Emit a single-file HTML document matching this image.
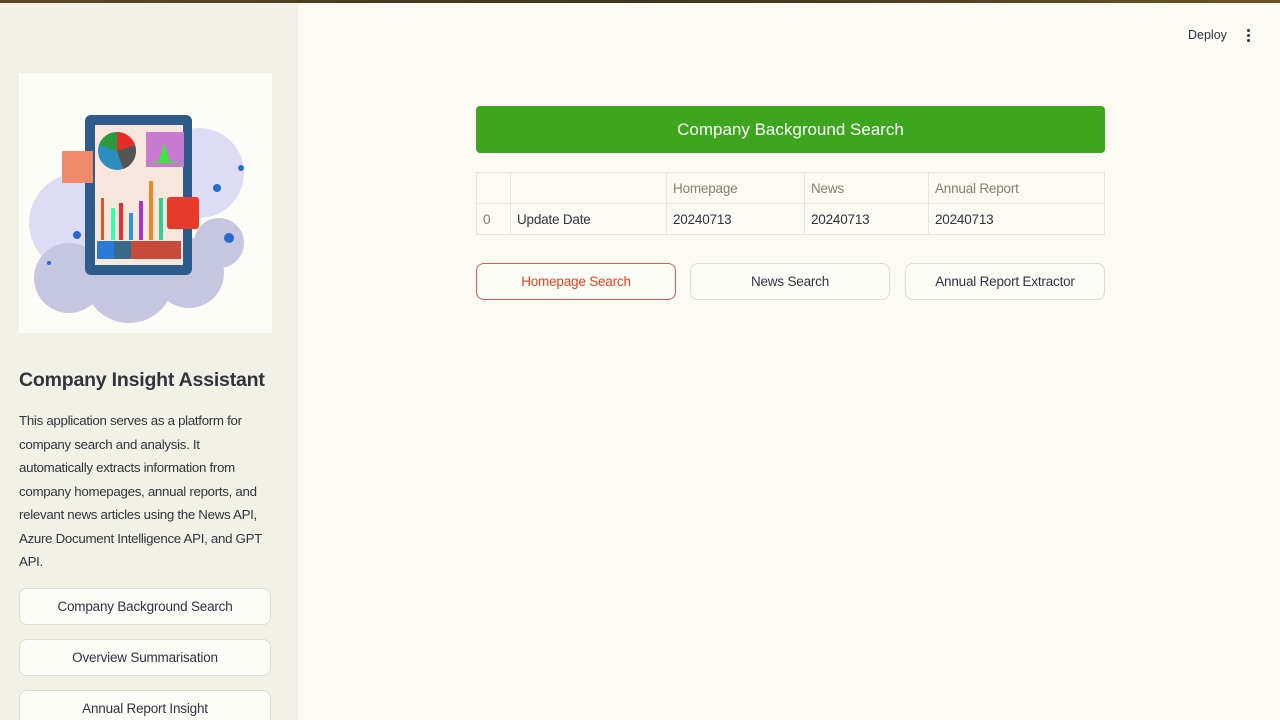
<!DOCTYPE html>
<html><head><meta charset="utf-8"><style>
*{box-sizing:border-box;margin:0;padding:0}
html,body{width:1280px;height:720px;overflow:hidden}
body{background:#fbfbf3;font-family:"Liberation Sans",sans-serif;color:#31333f;position:relative}
.top{position:absolute;left:0;top:0;width:1280px;height:3px;background:linear-gradient(90deg,#5a4a20,#3a3520,#6a5520)}
.side{position:absolute;left:0;top:3px;width:298px;height:717px;background:#f1f1e6}
.img{position:absolute;left:19px;top:73px;width:253px;height:260px;background:#fdfdf8}
h2{position:absolute;left:19px;top:369px;font-size:19.5px;font-weight:bold;color:#31333f;letter-spacing:-0.2px}
.desc{position:absolute;left:19px;top:409px;width:275px;font-size:13.3px;line-height:23.5px;letter-spacing:-0.3px;white-space:nowrap}
.sb{position:absolute;left:19px;width:252px;height:37px;border:1px solid #dcdcd0;border-radius:8px;background:#fdfdf8;font-size:13.5px;text-align:center;line-height:35px;letter-spacing:-0.2px}
.deploy{position:absolute;left:1188px;top:28px;font-size:12.5px}
.dots{position:absolute;left:1247px;top:29px;width:4px}
.dots i{display:block;width:3px;height:3px;background:#31333f;border-radius:50%;margin-bottom:2px}
.green{position:absolute;left:476px;top:106px;width:629px;height:47px;background:#3ea51e;border-radius:4px;color:#fff;font-size:17px;text-align:center;line-height:47px}
table{position:absolute;left:476px;top:172px;width:629px;border-collapse:collapse;font-size:13.5px;letter-spacing:-0.2px}
td{border:1px solid #e6e6d6;height:31px;padding:0 6px}
.g{color:#808070}
.btn{position:absolute;top:263px;width:200px;height:37px;border:1px solid #dcdcd0;border-radius:8px;font-size:13.5px;text-align:center;line-height:35px;background:#fdfdf8;letter-spacing:-0.2px}
</style></head><body>
<div class="top"></div>
<div class="side"></div>
<div class="img">
<svg width="253" height="260" viewBox="0 0 253 260">
<circle cx="180" cy="100" r="45" fill="#dcdcf5"/><circle cx="60" cy="150" r="50" fill="#dcdcf5"/>
<circle cx="50" cy="205" r="35" fill="#c5c6e0"/><circle cx="110" cy="205" r="45" fill="#c5c6e0"/><circle cx="170" cy="200" r="35" fill="#c5c6e0"/><circle cx="200" cy="170" r="25" fill="#c5c6e0"/>
<rect x="66" y="42" width="107" height="160" rx="6" fill="#2c5b8c"/>
<rect x="76" y="52" width="88" height="140" fill="#f6e6dc"/>
<circle cx="98" cy="78" r="19" fill="#2a8fc0"/><path d="M98 78 L98 59 A19 19 0 0 1 116 72Z" fill="#e82a2a"/><path d="M98 78 L80 72 A19 19 0 0 1 98 59Z" fill="#2a9a3a"/><path d="M98 78 L116 72 A19 19 0 0 1 104 96Z" fill="#555"/>
<rect x="127" y="59" width="38" height="35" fill="#c87ad0"/><path d="M130 90 L140 88 L145 70 L150 88 L163 90Z" fill="#3e3"/>
<rect x="43" y="78" width="31" height="32" fill="#f08a6a"/>
<g fill="#e8502a"><rect x="82" y="125" width="3" height="42"/><rect x="92" y="135" width="4" height="32" fill="#3fa"/><rect x="100" y="130" width="4" height="37" fill="#d33"/><rect x="110" y="140" width="4" height="27" fill="#39c"/><rect x="120" y="128" width="4" height="39" fill="#a3c"/><rect x="130" y="108" width="4" height="59" fill="#e82"/><rect x="140" y="125" width="4" height="42" fill="#3c9"/></g>
<rect x="78" y="168" width="84" height="18" fill="#c84a3a"/><rect x="78" y="168" width="17" height="18" fill="#2a7ad8"/><rect x="95" y="168" width="17" height="18" fill="#3a6a8a"/>
<rect x="148" y="124" width="32" height="32" rx="3" fill="#e83a2a"/>
<g fill="#2a6ad0"><circle cx="198" cy="115" r="4"/><circle cx="222" cy="95" r="3"/><circle cx="210" cy="165" r="5"/><circle cx="58" cy="162" r="4"/><circle cx="30" cy="190" r="2"/></g>
</svg></div>
<h2>Company Insight Assistant</h2>
<div class="desc">This application serves as a platform for<br>company search and analysis. It<br>automatically extracts information from<br>company homepages, annual reports, and<br>relevant news articles using the News API,<br>Azure Document Intelligence API, and GPT<br>API.</div>
<div class="sb" style="top:588px">Company Background Search</div>
<div class="sb" style="top:639px">Overview Summarisation</div>
<div class="sb" style="top:690px">Annual Report Insight</div>
<div class="deploy">Deploy</div>
<div class="dots"><i></i><i></i><i></i></div>
<div class="green">Company Background Search</div>
<table>
<tr><td style="width:34px"></td><td style="width:156px"></td><td class="g" style="width:138px">Homepage</td><td class="g" style="width:124px">News</td><td class="g">Annual Report</td></tr>
<tr><td class="g">0</td><td>Update Date</td><td>20240713</td><td>20240713</td><td>20240713</td></tr>
</table>
<div class="btn" style="left:476px;border-color:#e8574a;color:#e8401e">Homepage Search</div>
<div class="btn" style="left:690px">News Search</div>
<div class="btn" style="left:905px">Annual Report Extractor</div>
</body></html>
